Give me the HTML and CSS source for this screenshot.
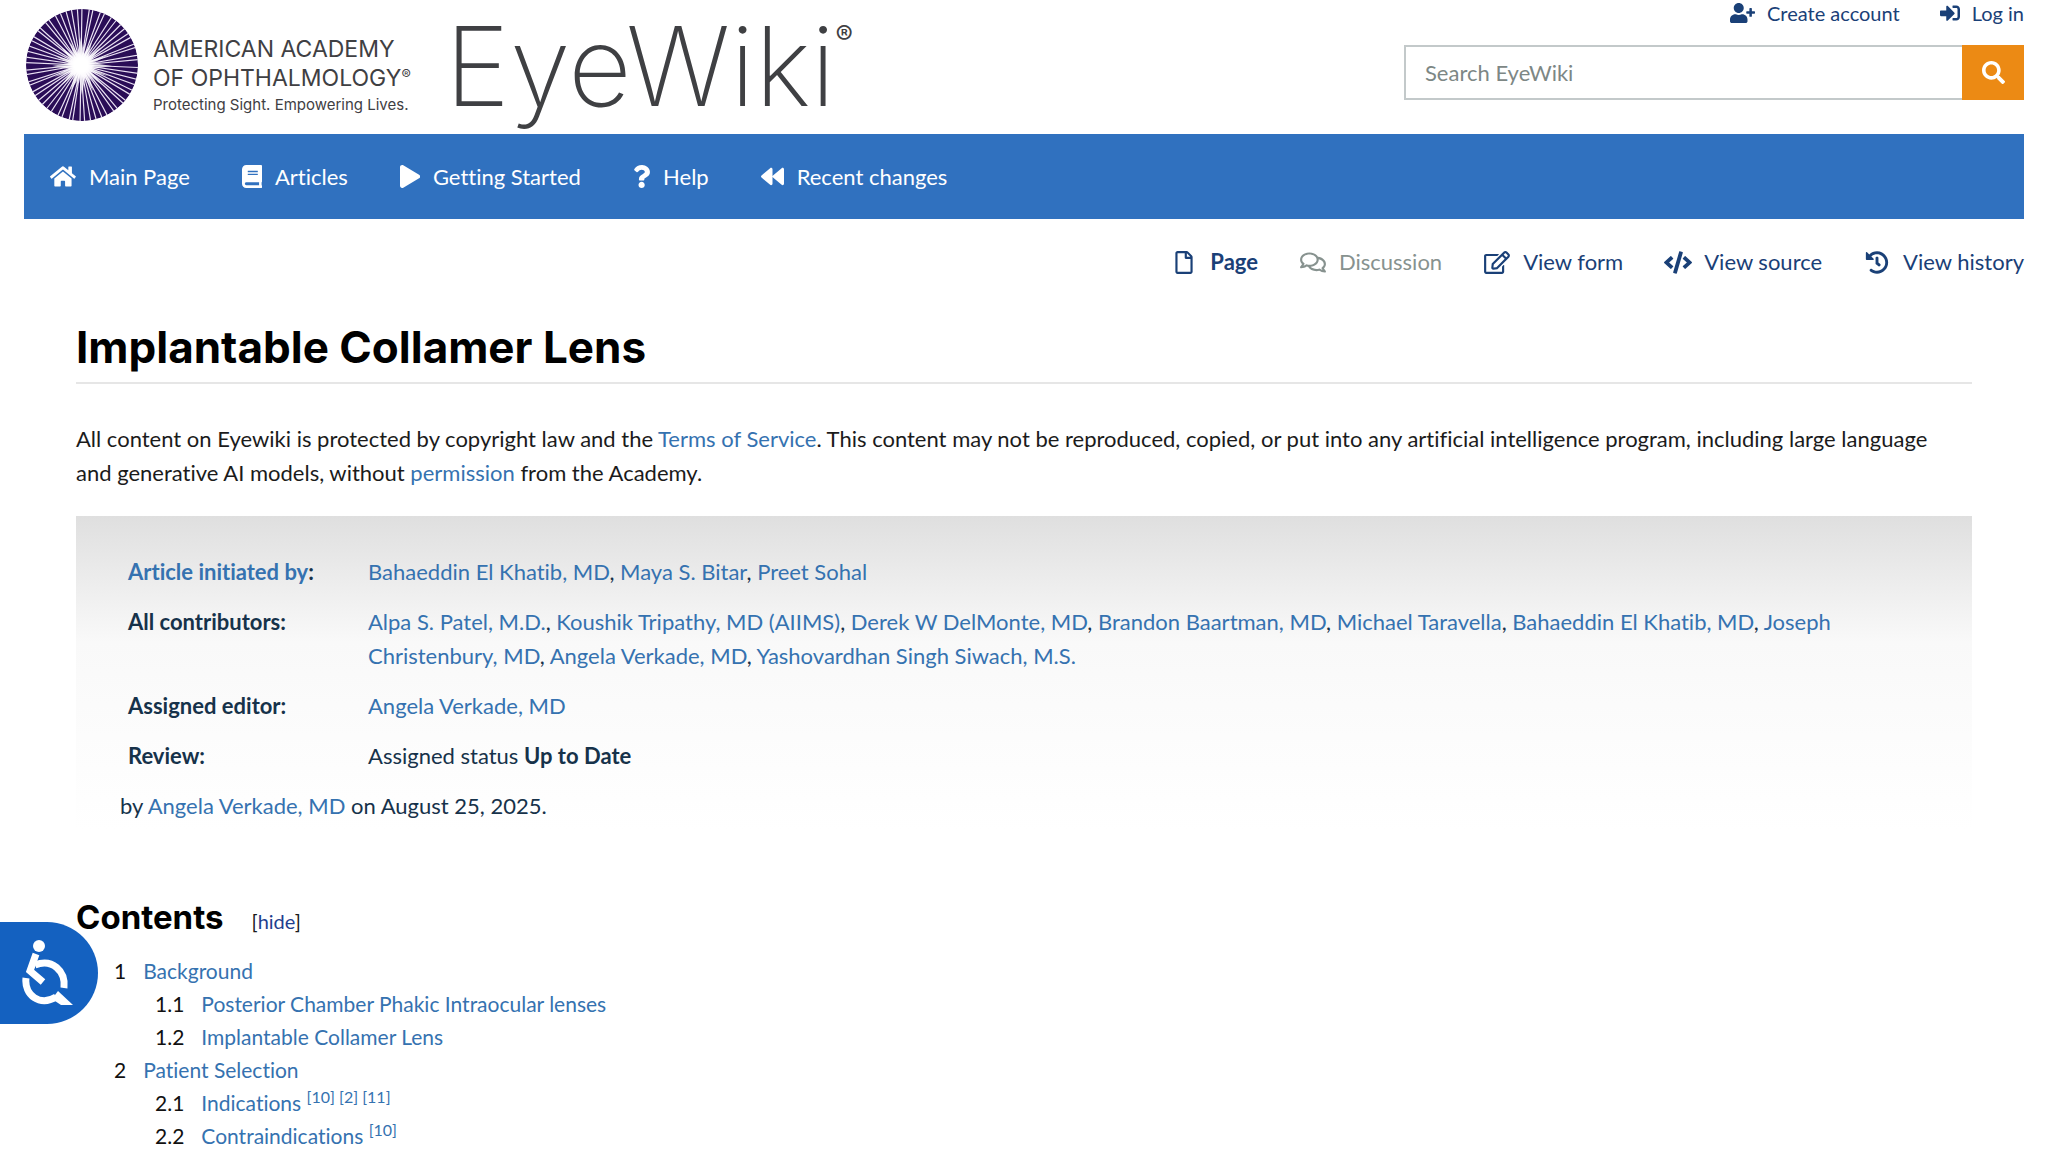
FILE: index.html
```html
<!DOCTYPE html>
<html lang="en">
<head>
  <meta charset="UTF-8" />
  <meta name="viewport" content="width=device-width, initial-scale=1.0"/>
  <title>Implantable Collamer Lens - EyeWiki</title>
  <link rel="stylesheet" href="styles.css">
</head>

<body>

<header class="header">
  <a class="brand" href="#">
    <svg class="burst" viewBox="0 0 112 112" aria-hidden="true">
      <defs>
        <clipPath id="disc"><circle cx="56" cy="56" r="56"/></clipPath>
        <radialGradient id="glow">
          <stop offset="0.5" stop-color="#fff"/>
          <stop offset="1" stop-color="#fff" stop-opacity="0"/>
        </radialGradient>
        <g id="rays">
          <path d="M0 0L1 -60M0 0L9 -60M0 0L13 -60M0 0L22 -60M0 0L27 -59M0 0L37 -58M0 0L41 -52M0 0L49 -50M0 0L54 -45M0 0L57 -38"/>
        </g>
      </defs>
      <g clip-path="url(#disc)">
        <circle cx="56" cy="56" r="56" fill="#2a0d57"/>
        <g transform="translate(55 56)" stroke="#e9e0f3" stroke-width="1.2">
          <use href="#rays"/>
          <use href="#rays" transform="rotate(60)"/>
          <use href="#rays" transform="rotate(120)"/>
          <use href="#rays" transform="rotate(180)"/>
          <use href="#rays" transform="rotate(240)"/>
          <use href="#rays" transform="rotate(300)"/>
        </g>
        <path fill="#fff" opacity="0.7" d="M55 28l3 17 8-12-4 15 13-10-10 13 18-5-16 8 19 3-19 3 15 7-17-4 11 13-13-10 4 16-8-13-3 17-3-17-8 12 3-15-12 10 9-13-17 5 15-8-17-3 17-3-14-7 16 4-10-13 13 10-4-15 8 12z"/>
        <circle cx="55" cy="56" r="14" fill="url(#glow)"/>
      </g>
    </svg>
    <span class="brand-text">
      <span class="brand-name">AMERICAN ACADEMY<br>OF OPHTHALMOLOGY<span class="reg">®</span></span>
      <span class="brand-tag">Protecting Sight. Empowering Lives.</span>
    </span>
    <span class="wordmark">EyeWiki<span class="wordmark-reg">®</span></span>
  </a>

  <div class="header-right">
    <nav class="user-links" aria-label="Personal tools">
      <a href="#"><svg class="icon" viewBox="0 0 640 512"><path d="M624 208h-64v-64c0-8.800-7.200-16-16-16h-32c-8.800 0-16 7.200-16 16v64h-64c-8.800 0-16 7.200-16 16v32c0 8.800 7.200 16 16 16h64v64c0 8.800 7.200 16 16 16h32c8.800 0 16-7.200 16-16v-64h64c8.800 0 16-7.200 16-16v-32c0-8.800-7.200-16-16-16zm-400 48c70.700 0 128-57.300 128-128S294.700 0 224 0 96 57.300 96 128s57.300 128 128 128zm89.600 32h-16.700c-22.200 10.200-46.900 16-72.900 16s-50.600-5.800-72.900-16h-16.700C60.200 288 0 348.200 0 422.400V464c0 26.500 21.500 48 48 48h352c26.500 0 48-21.500 48-48v-41.600c0-74.200-60.200-134.400-134.400-134.400z"/></svg>Create account</a>
      <a href="#"><svg class="icon" viewBox="0 0 512 512"><path d="M416 448h-84c-6.600 0-12-5.400-12-12v-40c0-6.600 5.400-12 12-12h84c17.700 0 32-14.300 32-32V160c0-17.700-14.300-32-32-32h-84c-6.600 0-12-5.400-12-12V76c0-6.600 5.400-12 12-12h84c53 0 96 43 96 96v192c0 53-43 96-96 96zm-47-201L201 79c-15-15-41-4.500-41 17v96H24c-13.300 0-24 10.700-24 24v96c0 13.300 10.700 24 24 24h136v96c0 21.500 26 32 41 17l168-168c9.300-9.400 9.300-24.600 0-34z"/></svg>Log in</a>
    </nav>
    <form class="search">
      <input type="search" placeholder="Search EyeWiki" aria-label="Search EyeWiki">
      <button type="button" aria-label="Search"><svg class="icon" viewBox="0 0 512 512"><path d="M505 442.700L405.300 343c-4.500-4.500-10.600-7-17-7H372c27.600-35.300 44-79.700 44-128C416 93.100 322.900 0 208 0S0 93.100 0 208s93.100 208 208 208c48.300 0 92.700-16.400 128-44v16.300c0 6.400 2.500 12.500 7 17l99.700 99.700c9.400 9.400 24.600 9.400 33.900 0l28.300-28.300c9.400-9.400 9.400-24.600.1-34zM208 336c-70.700 0-128-57.200-128-128 0-70.700 57.200-128 128-128 70.700 0 128 57.200 128 128 0 70.700-57.200 128-128 128z"/></svg></button>
    </form>
  </div>
</header>

<nav class="navbar" aria-label="Main">
  <a href="#"><svg class="icon" viewBox="0 0 576 512"><path d="M280.370 148.260L96 300.110V464a16 16 0 0 0 16 16l112.060-.29a16 16 0 0 0 15.920-16V368a16 16 0 0 1 16-16h64a16 16 0 0 1 16 16v95.640a16 16 0 0 0 16 16.050L464 480a16 16 0 0 0 16-16V300L295.670 148.260a12.190 12.190 0 0 0-15.300 0zM571.600 251.470L488 182.560V44.050a12 12 0 0 0-12-12h-56a12 12 0 0 0-12 12v72.610L318.470 43a48 48 0 0 0-61 0L4.340 251.470a12 12 0 0 0-1.600 16.900l25.500 31A12 12 0 0 0 45.150 301l235.220-193.740a12.190 12.190 0 0 1 15.300 0L530.900 301a12 12 0 0 0 16.900-1.600l25.500-31a12 12 0 0 0-1.700-16.930z"/></svg>Main Page</a>
  <a href="#"><svg class="icon" viewBox="0 0 448 512"><path d="M448 360V24c0-13.300-10.700-24-24-24H96C43 0 0 43 0 96v320c0 53 43 96 96 96h328c13.300 0 24-10.700 24-24v-16c0-7.500-3.500-14.300-8.900-18.700-4.200-15.400-4.200-59.300 0-74.700 5.400-4.300 8.900-11.100 8.900-18.600zM128 134c0-3.300 2.700-6 6-6h212c3.300 0 6 2.700 6 6v20c0 3.300-2.700 6-6 6H134c-3.300 0-6-2.700-6-6v-20zm0 64c0-3.300 2.700-6 6-6h212c3.300 0 6 2.700 6 6v20c0 3.300-2.700 6-6 6H134c-3.300 0-6-2.700-6-6v-20zm253.400 250H96c-17.700 0-32-14.300-32-32 0-17.600 14.400-32 32-32h285.400c-1.900 17.100-1.900 46.900 0 64z"/></svg>Articles</a>
  <a href="#"><svg class="icon" viewBox="0 0 448 512"><path d="M424.400 214.700L72.400 6.600C43.800-10.300 0 6.100 0 47.900V464c0 37.500 40.700 60.100 72.400 41.300l352-208c31.400-18.500 31.500-64.100 0-82.600z"/></svg>Getting Started</a>
  <a href="#"><svg class="icon" viewBox="0 0 384 512"><path d="M202 0C122.200 0 70.500 32.700 29.900 91c-7.400 10.600-5.100 25.100 5.200 32.900l43.100 32.700c10.400 7.900 25.100 6 33.300-4.100 25-31.400 43.600-49.500 82.700-49.500 30.800 0 68.900 19.800 68.900 49.600 0 22.600-18.700 34.200-49 51.200-35.500 19.900-82.300 44.600-82.300 106.400V320c0 13.300 10.700 24 24 24h72.400c13.300 0 24-10.700 24-24v-5.800c0-42.800 125.300-44.600 125.300-160.600C377.500 66.300 286.900 0 202 0zM192 373.500c-38.200 0-69.300 31-69.300 69.200s31.100 69.300 69.300 69.300 69.300-31.100 69.300-69.300-31.100-69.200-69.300-69.200z"/></svg>Help</a>
  <a href="#"><svg class="icon" viewBox="0 0 512 512"><path d="M11.500 280.600l192 160c20.600 17.200 52.500 2.800 52.500-24.600V96c0-27.400-31.900-41.800-52.500-24.600l-192 160c-15.300 12.800-15.300 36.400 0 49.200zm256 0l192 160c20.600 17.200 52.500 2.800 52.500-24.600V96c0-27.400-31.900-41.800-52.500-24.600l-192 160c-15.300 12.800-15.300 36.400 0 49.200z"/></svg>Recent changes</a>
</nav>

<nav class="page-tabs" aria-label="Page tools">
  <a class="active" href="#"><svg class="icon" viewBox="0 0 384 512"><path d="M369.900 97.900L286 14C277 5 264.800 0 252.100 0H48C21.500 0 0 21.500 0 48v416c0 26.500 21.500 48 48 48h288c26.500 0 48-21.500 48-48V131.900c0-12.700-5.100-25-14.100-34zM332.100 128H256V51.900l76.100 76.100zM48 464V48h160v104c0 13.300 10.700 24 24 24h104v288H48z"/></svg>Page</a>
  <a class="muted" href="#"><svg class="icon" viewBox="0 0 576 512"><path d="M532 386.200c27.500-27.100 44-61.100 44-98.200 0-80-76.500-146.100-176.200-157.900C368.300 72.500 294.300 32 208 32 93.100 32 0 103.600 0 192c0 37 16.500 71 44 98.200-15.300 30.700-37.300 54.500-37.700 54.900-6.300 6.700-8.100 16.500-4.400 25 3.600 8.500 12 14 21.200 14 53.500 0 96.700-20.200 125.200-38.800 9.200 2.100 18.700 3.700 28.400 4.900C208.100 407.600 281.800 448 368 448c20.800 0 40.800-2.400 59.800-6.800C456.300 459.700 499.400 480 553 480c9.200 0 17.500-5.500 21.200-14 3.600-8.500 1.900-18.300-4.400-25-.4-.3-22.500-24.100-37.800-54.800zm-392.800-92.300L122.100 305c-14.100 9.100-28.500 16.300-43.100 21.400 2.700-4.700 5.400-9.700 8-14.800l15.500-31.100L77.700 256C64.200 242.600 48 220.700 48 192c0-60.700 73.300-112 160-112s160 51.300 160 112-73.300 112-160 112c-16.500 0-33-1.900-49-5.600l-19.800-4.500zM498.300 352l-24.700 24.400 15.500 31.100c2.600 5.100 5.300 10.100 8 14.800-14.600-5.100-29-12.300-43.100-21.400l-17.100-11.100-19.900 4.600c-16 3.700-32.500 5.600-49 5.600-54 0-102.200-20.100-131.300-49.700C338 339.500 416 272.900 416 192c0-3.400-.4-6.700-.7-10C479.700 196.500 528 238.800 528 288c0 28.700-16.200 50.600-29.700 64z"/></svg>Discussion</a>
  <a href="#"><svg class="icon" viewBox="0 0 576 512"><path d="M402.300 344.900l32-32c5-5 13.700-1.500 13.700 5.700V464c0 26.500-21.500 48-48 48H48c-26.500 0-48-21.500-48-48V112c0-26.500 21.500-48 48-48h273.500c7.100 0 10.700 8.600 5.700 13.700l-32 32c-1.500 1.500-3.500 2.300-5.700 2.300H48v352h352V350.500c0-2.100.8-4.100 2.300-5.600zm156.600-201.800L296.300 405.700l-90.400 10c-26.200 2.900-48.500-19.200-45.600-45.600l10-90.400L432.900 17.100c22.900-22.900 59.900-22.900 82.700 0l43.200 43.200c22.900 22.900 22.900 60 .1 82.800zM460.100 174L402 115.900 216.200 301.800l-7.300 65.300 65.300-7.300L460.100 174zm64.800-79.700l-43.200-43.200c-4.100-4.100-10.800-4.100-14.800 0L436 82l58.100 58.100 30.900-30.900c4-4.200 4-10.800-.1-14.900z"/></svg>View form</a>
  <a href="#"><svg class="icon" viewBox="0 0 640 512"><path d="M278.900 511.500l-61-17.700c-6.400-1.800-10-8.500-8.200-14.900L346.200 8.700c1.800-6.400 8.500-10 14.900-8.200l61 17.700c6.400 1.800 10 8.500 8.200 14.900L293.800 503.300c-1.900 6.400-8.500 10.100-14.900 8.200zm-114-112.200l43.500-46.400c4.600-4.900 4.300-12.700-.8-17.200L117 256l90.600-79.700c5.100-4.500 5.500-12.300.8-17.200l-43.500-46.400c-4.500-4.800-12.100-5.100-17-.5L3.800 247.200c-5.100 4.700-5.100 12.800 0 17.500l144.100 135.100c4.900 4.600 12.500 4.400 17-.5zm327.200.6l144.100-135.100c5.100-4.700 5.100-12.800 0-17.500L492.100 112.100c-4.800-4.500-12.400-4.300-17 .5L431.600 159c-4.600 4.900-4.300 12.700.8 17.200L523 256l-90.600 79.700c-5.100 4.500-5.500 12.300-.8 17.200l43.500 46.400c4.500 4.900 12.100 5.100 17 .6z"/></svg>View source</a>
  <a href="#"><svg class="icon" viewBox="0 0 512 512"><path d="M504 255.500c.3 136.700-111.200 248.400-247.800 248.500-59 0-113.200-20.500-155.800-54.900-11.100-9-11.900-25.600-1.900-35.600l11.300-11.300c8.600-8.600 22.400-9.500 31.900-2C173.100 425.100 212.800 440 256 440c101.700 0 184-82.300 184-184 0-101.700-82.300-184-184-184-48.800 0-93.100 19-126.100 49.900l50.800 50.800c10.100 10.100 2.900 27.300-11.300 27.300H24c-8.800 0-16-7.200-16-16V38.600c0-14.200 17.200-21.400 27.300-11.300l49.400 49.400C129.200 34.100 189.600 8 256 8c136.800 0 247.700 110.800 248 247.500zm-180.900 78.800l9.800-12.600c8.100-10.500 6.300-25.600-4.200-33.700L288 256.300V152c0-13.300-10.700-24-24-24h-16c-13.300 0-24 10.700-24 24v135.700l65.400 50.800c10.500 8.200 25.500 6.300 33.700-4.200z"/></svg>View history</a>
</nav>

<main class="content">
  <h1>Implantable Collamer Lens</h1>

  <p class="notice">All content on Eyewiki is protected by copyright law and the <a href="#">Terms of Service</a>. This content may not be reproduced, copied, or put into any artificial intelligence program, including large language and generative AI models, without <a href="#">permission</a> from the Academy.</p>

  <section class="article-info">
    <table>
      <tr>
        <th scope="row"><a href="#">Article initiated by</a>:</th>
        <td><a href="#">Bahaeddin El Khatib, MD</a>, <a href="#">Maya S. Bitar</a>, <a href="#">Preet Sohal</a></td>
      </tr>
      <tr>
        <th scope="row">All contributors:</th>
        <td><a href="#">Alpa S. Patel, M.D.</a>, <a href="#">Koushik Tripathy, MD (AIIMS)</a>, <a href="#">Derek W DelMonte, MD</a>, <a href="#">Brandon Baartman, MD</a>, <a href="#">Michael Taravella</a>, <a href="#">Bahaeddin El Khatib, MD</a>, <a href="#">Joseph Christenbury, MD</a>, <a href="#">Angela Verkade, MD</a>, <a href="#">Yashovardhan Singh Siwach, M.S.</a></td>
      </tr>
      <tr>
        <th scope="row">Assigned editor:</th>
        <td><a href="#">Angela Verkade, MD</a></td>
      </tr>
      <tr>
        <th scope="row">Review:</th>
        <td>Assigned status <b>Up to Date</b></td>
      </tr>
    </table>
    <p>by <a href="#">Angela Verkade, MD</a> on August 25, 2025.</p>
  </section>

  <section class="toc">
    <div class="toc-title">
      <h2>Contents</h2>
      <span class="toc-toggle">[<a href="#">hide</a>]</span>
    </div>
    <ul>
      <li><span class="num">1</span><a href="#">Background</a>
        <ul>
          <li><span class="num">1.1</span><a href="#">Posterior Chamber Phakic Intraocular lenses</a></li>
          <li><span class="num">1.2</span><a href="#">Implantable Collamer Lens</a></li>
        </ul>
      </li>
      <li><span class="num">2</span><a href="#">Patient Selection</a>
        <ul>
          <li><span class="num">2.1</span><a href="#">Indications <sup>[10] [2] [11]</sup></a></li>
          <li><span class="num">2.2</span><a href="#">Contraindications <sup>[10]</sup></a></li>
        </ul>
      </li>
    </ul>
  </section>
</main>

<button class="a11y-btn" type="button" aria-label="Accessibility">
  <svg viewBox="0 0 52 66" aria-hidden="true">
    <circle cx="17" cy="6" r="6" fill="#fff"/>
    <g fill="none" stroke="#fff" stroke-width="7">
      <path d="M14 14L8 31L21 42"/>
      <path d="M13 25C30 18 44 31 42 48"/>
      <path d="M4 38C2 55 18 67 34 57"/>
    </g>
    <path fill="#fff" d="M36 51L51 65H39L30 59z"/>
  </svg>
</button>

</body>
</html>
```
FILE: styles.css
```css
* {
    box-sizing: border-box;
}
body {
    margin: 0;
    padding: 0 24px;
    background: #fff;
    color: #1b1b1b;
    font-family: Lato, sans-serif;
    font-size: 22px;
    line-height: 34px;
    font-variant-ligatures: none;
}
a {
    color: #3572b0;
    text-decoration: none;
}
a:hover {
    text-decoration: underline;
}
.icon {
    height: 23px;
    fill: currentColor;
    flex: none;
}

/* Header */
.header {
    display: flex;
    justify-content: space-between;
    height: 134px;
}
.brand {
    display: flex;
    align-items: flex-start;
    color: #3f4043;
    font-family: Inter, sans-serif;
}
.burst {
    width: 112px;
    margin: 9px 15px 0 2px;
}
.brand-text {
    padding-top: 35px;
    width: 292px;
}
.brand-name {
    display: block;
    font-size: 23px;
    line-height: 29px;
    white-space: nowrap;
}
.reg {
    font-size: 14px;
    vertical-align: 6px;
    line-height: 1;
}
.brand-tag {
    display: block;
    font-size: 15px;
    line-height: 24px;
}
.wordmark {
    font-size: 110px;
    font-weight: 200;
    line-height: 132px;
}
.wordmark-reg {
    font-size: 26px;
    font-weight: 400;
    vertical-align: 62px;
    line-height: 1;
}
.header-right {
    width: 31%;
}
.user-links {
    display: flex;
    justify-content: flex-end;
    gap: 40px;
    font-size: 20px;
    line-height: 26px;
    margin-bottom: 19px;
}
.user-links .icon {
    height: 20px;
}
.user-links a,
.page-tabs a {
    display: flex;
    align-items: center;
    gap: 12px;
    color: #1a4077;
}
.search {
    display: flex;
    height: 55px;
}
.search input {
    flex: 1;
    min-width: 0;
    padding: 0 19px;
    border: 2px solid #c3c9ca;
    border-right: none;
    font: inherit;
    background: #fff;
}
.search input::placeholder {
    color: #7d8785;
}
.search button {
    width: 62px;
    border: none;
    background: #ec8a14;
    color: #fff;
    cursor: pointer;
    display: flex;
    align-items: center;
    justify-content: center;
}

/* Navigation */
.navbar {
    display: flex;
    height: 85px;
    background: #3071bf;
}
.navbar a {
    display: flex;
    align-items: center;
    gap: 13px;
    padding: 0 26px;
    color: #fff;
}
.page-tabs {
    display: flex;
    justify-content: flex-end;
    gap: 41px;
    padding-top: 26px;
}
.page-tabs .icon {
    width: 28px;
}
.page-tabs .active {
    font-weight: bold;
}
.page-tabs .muted {
    color: #87928f;
}

/* Article */
.content {
    padding: 0 52px;
}
h1, h2 {
    margin: 0;
    color: #000;
    font-family: Inter, sans-serif;
    font-weight: 700;
}
h1 {
    margin-top: 41px;
    padding-bottom: 8px;
    border-bottom: 2px solid #e6e6e6;
    font-size: 44px;
    line-height: 54px;
}
.notice {
    margin: 38px 0 26px;
    padding-right: 20px;
}
.article-info {
    padding: 31px 44px 0;
    color: #16324a;
    background: linear-gradient(#dfdfdf, #f9f9f9 40%, #fff);
}
.article-info table {
    border-collapse: collapse;
}
.article-info th,
.article-info td {
    padding: 8px;
    text-align: left;
    vertical-align: top;
}
.article-info th {
    width: 240px;
}
.article-info p {
    margin: 0;
    padding: 8px 0;
}

/* Table of contents */
.toc {
    margin-top: 64px;
    font-size: 21px;
    line-height: 33px;
}
.toc-title {
    display: flex;
    align-items: baseline;
    gap: 28px;
    margin-bottom: 15px;
}
h2 {
    font-size: 33px;
    line-height: 44px;
}
.toc-toggle {
    font-size: 20px;
}
.toc-toggle a {
    color: #1f3f8f;
}
.toc ul {
    margin: 0;
    padding: 0;
    list-style: none;
}
.toc > ul {
    padding-left: 38px;
}
.toc ul ul {
    padding-left: 41px;
}
.num {
    margin-right: 17px;
    color: #111;
}
sup {
    font-size: 16px;
    line-height: 1;
}

/* Accessibility tab on the left edge */
.a11y-btn {
    position: fixed;
    left: 0;
    top: 922px;
    width: 98px;
    height: 102px;
    padding: 0 0 0 22px;
    border: none;
    border-radius: 0 51px 51px 0;
    background: #1461c0;
    cursor: pointer;
}
.a11y-btn svg {
    display: block;
    width: 52px;
    height: 66px;
}
```
